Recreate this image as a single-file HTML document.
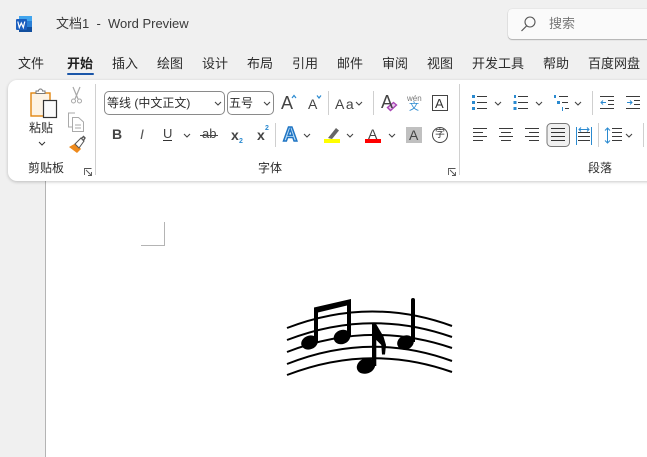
<!DOCTYPE html>
<html lang="zh">
<head>
<meta charset="utf-8">
<style>
html,body{margin:0;padding:0}
body{width:647px;height:457px;overflow:hidden;background:#f0f0f0;position:relative;font-family:"Liberation Sans","Noto Sans CJK SC",sans-serif;color:#2b2b2b}
.t{position:absolute;white-space:nowrap;line-height:16px;font-size:13px;z-index:2}
#page{position:absolute;left:45px;top:100px;width:602px;height:357px;background:#fff;border-left:1px solid #b4b4b4}
#ribbon{position:absolute;left:8px;top:80px;width:660px;height:101px;background:#fff;border-radius:9px;box-shadow:0 1px 3px rgba(0,0,0,.22)}
#search{position:absolute;left:508px;top:9px;width:160px;height:30px;background:#fafafa;border-radius:4px;box-shadow:0 1px 1px rgba(0,0,0,.25),0 0 1px rgba(0,0,0,.2)}
.box{position:absolute;box-sizing:border-box;border:1px solid #8a8a8a;border-radius:5px;height:24px;background:#fff}
svg{position:absolute;left:0;top:0;z-index:1}
</style>
</head>
<body>
<div id="page"></div>
<div id="ribbon"></div>
<div id="search"></div>
<div class="box" style="left:104px;top:91px;width:121px"></div>
<div class="box" style="left:227px;top:91px;width:47px"></div>

<div class="t" style="left:56px;top:16px;color:#3a3a3a">文档1&nbsp; - &nbsp;Word Preview</div>
<div class="t" style="left:549px;top:16px;color:#777">搜索</div>

<div class="t" style="left:18px;top:56px">文件</div>
<div class="t" style="left:67px;top:56px;font-weight:bold;color:#222">开始</div>
<div class="t" style="left:112px;top:56px">插入</div>
<div class="t" style="left:157px;top:56px">绘图</div>
<div class="t" style="left:202px;top:56px">设计</div>
<div class="t" style="left:247px;top:56px">布局</div>
<div class="t" style="left:292px;top:56px">引用</div>
<div class="t" style="left:337px;top:56px">邮件</div>
<div class="t" style="left:382px;top:56px">审阅</div>
<div class="t" style="left:427px;top:56px">视图</div>
<div class="t" style="left:472px;top:56px">开发工具</div>
<div class="t" style="left:543px;top:56px">帮助</div>
<div class="t" style="left:588px;top:56px">百度网盘</div>

<div class="t" style="left:29px;top:120px;font-size:12px">粘贴</div>
<div class="t" style="left:28px;top:160px;font-size:12px">剪贴板</div>
<div class="t" style="left:258px;top:160px;font-size:12px">字体</div>
<div class="t" style="left:588px;top:160px;font-size:12px">段落</div>
<div class="t" style="left:107px;top:95px;font-size:12px">等线 (中文正文)</div>
<div class="t" style="left:229px;top:95px;font-size:12px">五号</div>

<div class="t" style="left:112px;top:126px;font-size:14px;font-weight:bold;color:#444">B</div>
<div class="t" style="left:140px;top:126px;font-size:14px;font-style:italic;color:#555">I</div>
<div class="t" style="left:163px;top:126px;font-size:13px;color:#444">U</div>
<div class="t" style="left:202px;top:126px;font-size:13px;color:#444">ab</div>
<div class="t" style="left:231px;top:127px;font-size:14px;font-weight:bold;color:#444">x</div>
<div class="t" style="left:239px;top:134px;font-size:7px;font-weight:bold;color:#2a8ad0">2</div>
<div class="t" style="left:257px;top:127px;font-size:14px;font-weight:bold;color:#444">x</div>
<div class="t" style="left:265px;top:121px;font-size:7px;font-weight:bold;color:#2a8ad0">2</div>
<div class="t" style="left:281px;top:95px;font-size:18px;color:#444">A</div>
<div class="t" style="left:308px;top:96px;font-size:14px;color:#444">A</div>
<div class="t" style="left:335px;top:96px;font-size:14px;letter-spacing:1.500px;color:#444">Aa</div>
<div class="t" style="left:381px;top:94px;font-size:18px;color:#444">A</div>
<div class="t" style="left:407px;top:91px;font-size:8px;color:#777">wén</div>
<div class="t" style="left:409px;top:100px;font-size:10px;color:#2a8ad0">文</div>
<div class="t" style="left:435px;top:96px;font-size:13px;color:#333">A</div>
<div class="t" style="left:283px;top:127px;font-size:20px;font-weight:bold;color:#bcdcf5;-webkit-text-stroke:1.500px #1f75c4">A</div>
<div class="t" style="left:368px;top:126px;font-size:14px;color:#444">A</div>
<div class="t" style="left:409px;top:127px;font-size:14px;color:#444">A</div>
<div class="t" style="left:435px;top:127px;font-size:10px;color:#333">字</div>

<svg width="647" height="457" viewBox="0 0 647 457" fill="none">
  <!-- word icon -->
  <rect x="19" y="16" width="13" height="16" fill="#2a7fd6"/>
  <rect x="19" y="16" width="13" height="5" fill="#41a5ee"/>
  <rect x="19" y="27" width="13" height="5" fill="#124f9e"/>
  <rect x="16" y="19" width="11" height="11" rx="1" fill="#1b5ebe"/>
  <path d="M17.800 21.500l1.500 6 2-4.500 2 4.500 1.500-6" stroke="#fff" stroke-width="1.200"/>
  <!-- tab underline -->
  <rect x="67" y="73" width="27" height="2" rx="1" fill="#1b56a8"/>
  <!-- search icon -->
  <circle cx="530" cy="22" r="5" stroke="#555" stroke-width="1.100"/>
  <path d="M526.500 26l-5 5" stroke="#555" stroke-width="1.200"/>

  <!-- separators -->
  <path d="M95.500 84v91M459.500 84v91" stroke="#d0d0d0"/>
  <path d="M328.500 91v24M373.500 91v24M275.500 123v24M592.500 91v24M598.500 123v24M643.500 123v24" stroke="#cfcfcf"/>

  <!-- paste -->
  <rect x="31" y="93" width="19" height="23" fill="#fdf3e4" stroke="#e2860f" stroke-width="1.400"/>
  <path d="M36 93.500h9v-2.500h-2.500a2 2 0 0 0-4 0H36z" fill="#fff" stroke="#777"/>
  <rect x="43.500" y="100.500" width="13" height="17" fill="#fbfbfb" stroke="#333" stroke-width="1.200"/>
  <path d="M39 142l3 3 3-3" stroke="#333"/>
  <!-- cut -->
  <path d="M73 87l5 12M80 87l-5 12" stroke="#a8a8a8" stroke-width="1.200"/>
  <circle cx="73.500" cy="101" r="2" stroke="#a8a8a8"/><circle cx="79.500" cy="101" r="2" stroke="#a8a8a8"/>
  <!-- copy -->
  <path d="M72 127h-3.500v-14h6.500" stroke="#aaa"/>
  <path d="M72.500 117.500h6l5 4.500v9.500h-11z" fill="#fff" stroke="#aaa"/>
  <path d="M75 125h6M75 128h6" stroke="#aaa"/>
  <!-- format painter -->
  <path d="M69 147l7-4 5 6-4 4z" fill="#ee8a1c"/>
  <path d="M75 144l6-6 3 3-5 7z" fill="#fff" stroke="#555"/>
  <path d="M81 139l2.500-2.500 1.500 1.500-2 3" stroke="#555" stroke-width="1.400"/>
  <!-- launchers -->
  <g stroke="#555" stroke-width=".9">
    <path d="M84.500 175v-6.500h7M91.500 172v3.500H88M86 170l5 5"/>
    <path d="M448.500 175v-6.500h7M455.500 172v3.500H452M450 170l5 5"/>
  </g>
  <!-- chevrons -->
  <g stroke="#444" stroke-width="1.100">
    <path d="M215 102l3 3 3-3M264 102l3 3 3-3M356 102l3 3 3-3M495 102l3 3 3-3M536 102l3 3 3-3M575 102l3 3 3-3"/>
    <path d="M184 134l3 3 3-3M304 134l3 3 3-3M347 134l3 3 3-3M389 134l3 3 3-3M626 134l3 3 3-3"/>
  </g>
  <!-- grow/shrink arrows -->
  <path d="M292 98l2-2.500 2 2.500" stroke="#2a8ad0" stroke-width="1.200"/>
  <path d="M317 95.500l2 2.500 2-2.500" stroke="#2a8ad0" stroke-width="1.200"/>
  <!-- clear format eraser -->
  <path d="M387.500 107.500l6-5 3 2.500-6 5.500z" fill="#e9c9ef" stroke="#a945b5" stroke-width="1.400"/>
  <!-- U underline, strike -->
  <path d="M163 140.500h9" stroke="#333"/>
  <path d="M200 135.500h18" stroke="#444"/>
  <!-- char box -->
  <rect x="432.500" y="95.500" width="15" height="15" stroke="#444"/>
  <!-- highlight -->
  <path d="M328 138l8-10 3 2.500-7 8.500z" fill="#666"/>
  <rect x="324" y="139" width="16" height="4" fill="#ff0"/>
  <rect x="365" y="139" width="16" height="4" fill="#f00"/>
  <rect x="406" y="127" width="16" height="16" fill="#c0c0c0"/>
  <circle cx="440" cy="135" r="7.500" stroke="#444"/>
  <!-- bullets -->
  <g fill="#2a8ad0">
    <rect x="472" y="95" width="3" height="3"/><rect x="472" y="101" width="3" height="3"/><rect x="472" y="107" width="3" height="3"/>
    <rect x="514" y="95" width="2" height="3"/><rect x="513.500" y="101" width="3" height="3"/><rect x="513.500" y="107" width="3" height="3"/>
    <rect x="554" y="95" width="2" height="3"/><rect x="557" y="101" width="3" height="3"/><rect x="562" y="107" width="1" height="4"/>
  </g>
  <g stroke="#3a3a3a">
    <path d="M477 96.500h10M477 102.500h10M477 108.500h10"/>
    <path d="M518 96.500h10M518 102.500h10M518 108.500h10"/>
    <path d="M559 96.500h9M562 102.500h6M565 108.500h4"/>
    <path d="M600 96.500h14M608 100.500h6M608 104.500h6M600 108.500h14"/>
    <path d="M626 96.500h14M626 108.500h14M634 100.500h6M634 104.500h6"/>
    <!-- aligns -->
    <path d="M473 128.500h14M473 132.500h10M473 136.500h14M473 140.500h10"/>
    <path d="M499 128.500h14M501 132.500h10M499 136.500h14M501 140.500h10"/>
    <path d="M525 128.500h14M529 132.500h10M525 136.500h14M529 140.500h10"/>
    <path d="M578 132.500h12M578 136.500h12M578 140.500h12"/>
    <path d="M612 128.500h10M612 132.500h10M612 136.500h10M612 140.500h10"/>
  </g>
  <rect x="547" y="123.500" width="22.500" height="23" rx="4" fill="#f0f0f0" stroke="#777"/>
  <path d="M551 128.500h14M551 132.500h14M551 136.500h14M551 140.500h14" stroke="#333"/>
  <path d="M576.500 127v18M591.500 127v18M579 129.500h10M581 127.500l-2 2 2 2M587 127.500l2 2-2 2" stroke="#2a8ad0"/>
  <path d="M607.500 128v15M605 130.500l2.500-2.500 2.500 2.500M605 140.500l2.500 2.500 2.500-2.500" stroke="#2a8ad0"/>
  <path d="M601 102.500h5M603 100.500l-2 2 2 2M627 102.500h5M630 100.500l2 2-2 2" stroke="#2a8ad0"/>

  <!-- page corner mark -->
  <path d="M164.500 222v23.500H141" stroke="#b4b4b4"/>

  <!-- staff -->
  <g stroke="#000" stroke-width="2">
    <path d="M287 328Q370 296 452 326"/>
    <path d="M287 340Q370 308 452 337"/>
    <path d="M287 352Q370 320 452 348"/>
    <path d="M287 364Q370 331 452 361"/>
    <path d="M287 375Q370 343 452 372"/>
  </g>
  <!-- notes -->
  <g fill="#000">
    <ellipse cx="309.500" cy="342.500" rx="8.500" ry="6.800" transform="rotate(-22 309.500 342.500)"/>
    <ellipse cx="342" cy="337" rx="8.500" ry="7" transform="rotate(-22 342 337)"/>
    <path d="M314 343V307.500L351 299V337H347V305.500L318 312.500V343z"/>
    <ellipse cx="366" cy="366" rx="9.500" ry="7.500" transform="rotate(-22 366 366)"/>
    <path d="M372 366V323h3.500l8 13.500 2.500 8.500-1 9.500h-3l-.7-9.500-5-5V366z"/>
    <ellipse cx="405.500" cy="342.500" rx="8.500" ry="7" transform="rotate(-22 405.500 342.500)"/>
    <path d="M411 342V300a2 2 0 0 1 4 0V342z"/>
  </g>
</svg>
</body>
</html>
